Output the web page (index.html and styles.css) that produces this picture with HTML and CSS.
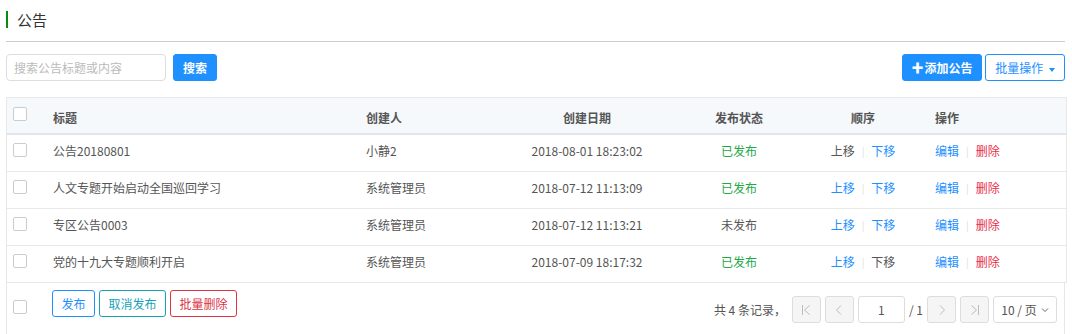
FILE: index.html
```html
<!DOCTYPE html>
<html lang="zh-CN">
<head>
    <meta charset="UTF-8">
    <title>公告</title>
    <link rel="stylesheet" href="styles.css">
</head>
<body>
    <div class="page">
        <div class="page-title">公告</div>

        <div class="toolbar">
            <input type="text" class="search-input" placeholder="搜索公告标题或内容">
            <button class="btn btn-primary">搜索</button>
            <div class="toolbar-right">
                <button class="btn btn-primary btn-add"><span class="plus">✚</span>添加公告</button>
                <button class="btn btn-outline">批量操作 <span class="caret"></span></button>
            </div>
        </div>

        <table class="grid">
            <colgroup>
                <col style="width:34px">
                <col style="width:313px">
                <col style="width:147px">
                <col style="width:172px">
                <col style="width:132px">
                <col style="width:116px">
                <col style="width:145px">
            </colgroup>
            <thead>
                <tr>
                    <th class="chk-cell"><span class="chk"></span></th>
                    <th class="left">标题</th>
                    <th class="left">创建人</th>
                    <th>创建日期</th>
                    <th>发布状态</th>
                    <th>顺序</th>
                    <th class="left ops">操作</th>
                </tr>
            </thead>
            <tbody>
                <tr>
                    <td class="chk-cell"><span class="chk"></span></td>
                    <td class="left">公告20180801</td>
                    <td class="left">小静2</td>
                    <td>2018-08-01 18:23:02</td>
                    <td class="on">已发布</td>
                    <td><span class="muted">上移</span><i class="sep">|</i><a>下移</a></td>
                    <td class="left ops"><a>编辑</a><i class="sep">|</i><a class="del">删除</a></td>
                </tr>
                <tr>
                    <td class="chk-cell"><span class="chk"></span></td>
                    <td class="left">人文专题开始启动全国巡回学习</td>
                    <td class="left">系统管理员</td>
                    <td>2018-07-12 11:13:09</td>
                    <td class="on">已发布</td>
                    <td><a>上移</a><i class="sep">|</i><a>下移</a></td>
                    <td class="left ops"><a>编辑</a><i class="sep">|</i><a class="del">删除</a></td>
                </tr>
                <tr>
                    <td class="chk-cell"><span class="chk"></span></td>
                    <td class="left">专区公告0003</td>
                    <td class="left">系统管理员</td>
                    <td>2018-07-12 11:13:21</td>
                    <td>未发布</td>
                    <td><a>上移</a><i class="sep">|</i><a>下移</a></td>
                    <td class="left ops"><a>编辑</a><i class="sep">|</i><a class="del">删除</a></td>
                </tr>
                <tr>
                    <td class="chk-cell"><span class="chk"></span></td>
                    <td class="left">党的十九大专题顺利开启</td>
                    <td class="left">系统管理员</td>
                    <td>2018-07-09 18:17:32</td>
                    <td class="on">已发布</td>
                    <td><a>上移</a><i class="sep">|</i><span class="muted">下移</span></td>
                    <td class="left ops"><a>编辑</a><i class="sep">|</i><a class="del">删除</a></td>
                </tr>
            </tbody>
        </table>

        <div class="grid-footer">
            <span class="chk"></span>
            <div class="batch">
                <button class="btn btn-line blue">发布</button>
                <button class="btn btn-line teal">取消发布</button>
                <button class="btn btn-line red">批量删除</button>
            </div>
            <div class="pager">
                <span class="total">共 4 条记录，</span>
                <button class="pg-btn" disabled>
                    <svg width="10" height="12" viewBox="0 0 10 12"><path d="M1.5 1v10M8.5 1.5L3.5 6l5 4.5" fill="none" stroke="#bbb" stroke-width="1"/></svg>
                </button>
                <button class="pg-btn" disabled>
                    <svg width="8" height="12" viewBox="0 0 8 12"><path d="M6 1.5L1.5 6L6 10.5" fill="none" stroke="#bbb" stroke-width="1"/></svg>
                </button>
                <input class="pg-input" type="text" value="1">
                <span class="pg-of">/ 1</span>
                <button class="pg-btn" disabled>
                    <svg width="8" height="12" viewBox="0 0 8 12"><path d="M2 1.5L6.5 6L2 10.5" fill="none" stroke="#bbb" stroke-width="1"/></svg>
                </button>
                <button class="pg-btn" disabled>
                    <svg width="10" height="12" viewBox="0 0 10 12"><path d="M8.5 1v10M1.5 1.5L6.5 6l-5 4.5" fill="none" stroke="#bbb" stroke-width="1"/></svg>
                </button>
                <div class="pg-size">10 / 页
                    <svg width="8" height="6" viewBox="0 0 8 6"><path d="M1 1.5L4 4.5L7 1.5" fill="none" stroke="#666" stroke-width="1"/></svg>
                </div>
            </div>
        </div>
    </div>
</body>
</html>
```

FILE: styles.css
```css
* {
    margin: 0;
    padding: 0;
    box-sizing: border-box;
}

body {
    font-family: "Microsoft YaHei", "Noto Sans CJK SC", sans-serif;
    font-size: 12px;
    color: #555;
    background: #fff;
}

.page {
    padding: 0 7px 0 6px;
}

.page-title {
    margin-top: 11px;
    height: 17px;
    line-height: 17px;
    border-left: 2px solid #0a8a0a;
    padding-left: 9px;
    font-size: 15px;
    color: #333;
}

.toolbar {
    margin-top: 13px;
    border-top: 1px solid #ccc;
    padding-top: 12px;
    display: flex;
    align-items: center;
}

.search-input {
    width: 160px;
    height: 27px;
    border: 1px solid #ddd;
    border-radius: 4px;
    padding: 0 7px;
    font-family: inherit;
    font-size: 12px;
    color: #555;
    outline: none;
}

.search-input::placeholder {
    color: #bbb;
}

.btn {
    height: 27px;
    border-radius: 3px;
    font-family: inherit;
    font-size: 12px;
    cursor: pointer;
    background: #fff;
}

.btn-primary {
    margin-left: 7px;
    padding: 0 9px;
    background: #1e90ff;
    border: 1px solid #1e90ff;
    color: #fff;
    font-weight: bold;
}

.toolbar-right {
    margin-left: auto;
    display: flex;
    gap: 3px;
}

.btn-add {
    margin-left: 0;
    width: 80px;
    padding: 0;
}

.plus {
    font-size: 12px;
    margin-right: 1px;
}

.btn-outline {
    width: 80px;
    border: 1px solid #1e90ff;
    color: #1e90ff;
}

.caret {
    display: inline-block;
    margin-left: 3px;
    vertical-align: middle;
    border-top: 4px solid #1e90ff;
    border-left: 3px solid transparent;
    border-right: 3px solid transparent;
}

.grid {
    width: 100%;
    margin-top: 16px;
    table-layout: fixed;
    border-collapse: separate;
    border-spacing: 0;
    border: 1px solid #e8e8e8;
    border-bottom: none;
}

.grid th {
    height: 37px;
    padding-top: 4px;
    background: #f5f9fc;
    border-bottom: 2px solid #e1e5ec;
    font-weight: bold;
    color: #555;
    text-align: center;
}

.grid td {
    height: 37px;
    padding-bottom: 6px;
    border-bottom: 1px solid #e8e8e8;
    text-align: center;
    color: #555;
}

.grid .left {
    text-align: left;
    padding-left: 12px;
}

.grid .ops {
    padding-left: 14px;
}

.grid th.chk-cell {
    vertical-align: top;
    padding-top: 9px;
}

.chk-cell {
    padding-left: 6px;
    text-align: left !important;
}

.chk {
    display: block;
    width: 14px;
    height: 14px;
    border: 1px solid #ccc;
    border-radius: 2px;
    background: #fff;
}

.on {
    color: #22a845 !important;
}

.grid a {
    color: #1e90ff;
}

.grid a.del {
    color: #e8304a;
}

.muted {
    color: #555;
}

.sep {
    font-style: normal;
    color: #ddd;
    font-size: 10px;
    margin: 0 7px;
    position: relative;
    top: -1px;
}

.grid-footer {
    height: 51px;
    border-left: 1px solid #e8e8e8;
    border-right: 1px solid #e8e8e8;
    display: flex;
    align-items: flex-start;
    padding-left: 6px;
    padding-right: 7px;
}

.grid-footer > .chk {
    margin-top: 17px;
}

.batch {
    margin-top: 7px;
    margin-left: 25px;
    display: flex;
    gap: 4px;
}

.btn-line {
    padding: 0 8.5px;
    border: 1px solid;
}

.btn-line.blue {
    color: #1e90ff;
    border-color: #1e90ff;
}

.btn-line.teal {
    color: #17a2b8;
    border-color: #17a2b8;
}

.btn-line.red {
    color: #dc3545;
    border-color: #dc3545;
}

.pager {
    margin-left: auto;
    margin-top: 13px;
    display: flex;
    align-items: center;
    gap: 4px;
}

.total {
    color: #555;
    margin-right: 2px;
}

.pg-btn {
    width: 29px;
    height: 27px;
    border: 1px solid #ddd;
    border-radius: 3px;
    background: #f5f5f5;
    display: flex;
    align-items: center;
    justify-content: center;
}

.pg-input {
    width: 47px;
    height: 27px;
    border: 1px solid #ddd;
    border-radius: 3px;
    text-align: center;
    font-family: inherit;
    font-size: 12px;
    color: #555;
    outline: none;
}

.pg-of {
    color: #555;
}

.pg-size {
    width: 64px;
    height: 27px;
    border: 1px solid #ddd;
    border-radius: 3px;
    display: flex;
    align-items: center;
    justify-content: center;
    gap: 4px;
    color: #555;
}
```
